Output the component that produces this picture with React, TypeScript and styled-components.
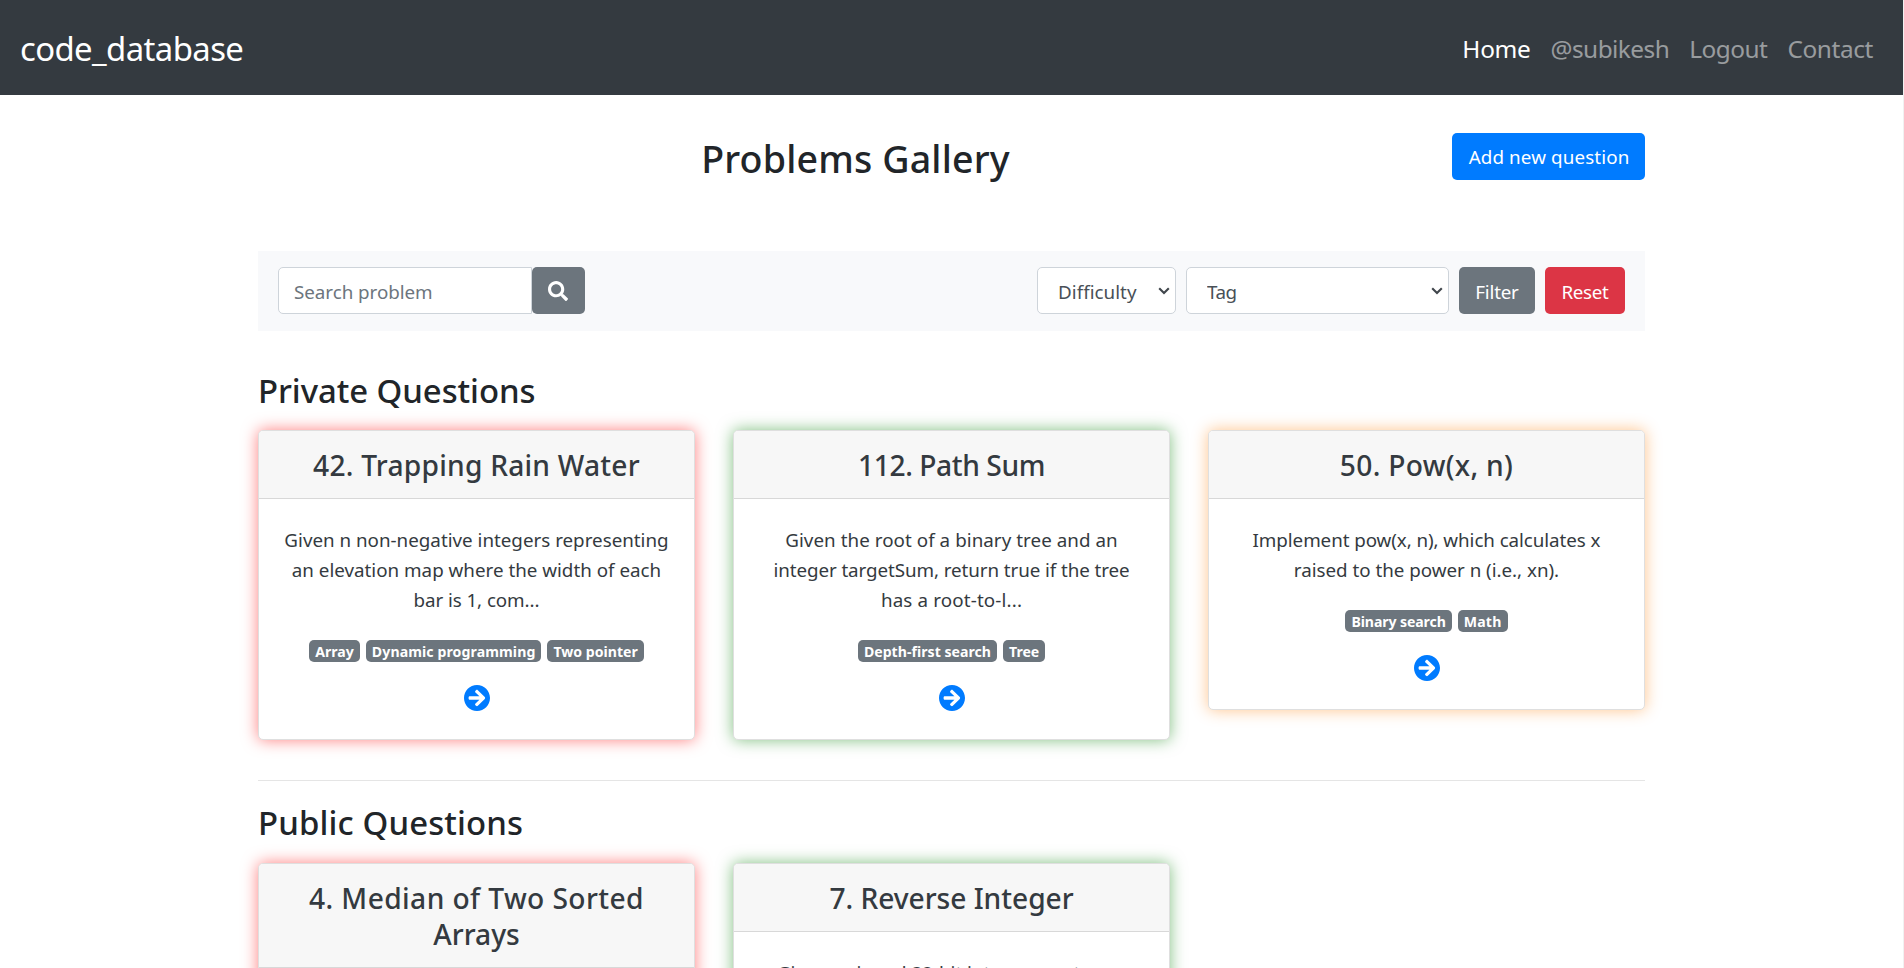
import React from "react";
import styled, { createGlobalStyle } from "styled-components";
import { FaSearch, FaArrowCircleRight } from "react-icons/fa";

const Global = createGlobalStyle`
  *, *::before, *::after { box-sizing: border-box; }
  html, body { margin: 0; height: 968px; overflow: hidden; }
  body {
    font-family: "Noto Sans", "Open Sans", sans-serif;
    font-size: 18.8px;
    line-height: 30px;
    color: #212529;
    background: #fff;
  }
  h1, h3, h4, p { margin: 0; font-weight: 500; }
`;

const Page = styled.div`
  height: 968px;
  overflow: hidden;
  border-right: 1px solid #f1f1f1;
`;

const Navbar = styled.nav`
  display: flex;
  justify-content: space-between;
  align-items: center;
  height: 95px;
  padding: 2px 30px 0 20px;
  background: #343a40;
`;

const Brand = styled.a`
  font-size: 32.9px;
  line-height: 42px;
  letter-spacing: -0.6px;
  color: #fff;
`;

const NavLinks = styled.div`
  display: flex;
  gap: 20px;
  padding-top: 1px;
`;

const NavLink = styled.a<{ $active?: boolean; $ls: number }>`
  font-size: 24.4px;
  line-height: 36px;
  letter-spacing: ${(p) => p.$ls}px;
  color: ${(p) => (p.$active ? "#fff" : "rgba(255, 255, 255, 0.5)")};
`;

const Container = styled.main`
  width: 1387px;
  margin: 38px 0 0 258px;
`;

const TitleRow = styled.header`
  display: flex;
  align-items: flex-start;
  height: 118px;
`;

const PageTitle = styled.h1`
  flex: 1;
  padding: 0 0 0 1px;
  font-size: 37.6px;
  line-height: 52px;
  letter-spacing: 0.15px;
  text-align: center;
`;

const Button = styled.button<{ $bg: string; $width: number; $ls?: number }>`
  display: flex;
  align-items: center;
  justify-content: center;
  flex: none;
  width: ${(p) => p.$width}px;
  height: 47px;
  padding: 2px 0 0;
  border: 0;
  border-radius: 5px;
  background: ${(p) => p.$bg};
  color: #fff;
  font: inherit;
  letter-spacing: ${(p) => p.$ls ?? 0}px;
`;

const IconButton = styled(Button)`
  padding: 0 1px 0 0;
`;

const AddButton = styled(Button)`
  padding: 0 0 0 1px;
`;

const Toolbar = styled.section`
  display: flex;
  justify-content: space-between;
  align-items: center;
  height: 80px;
  padding: 0 20px 1px;
  background: #f8f9fb;
`;

const ToolGroup = styled.div<{ $gap: number }>`
  display: flex;
  gap: ${(p) => p.$gap}px;
`;

const SearchInput = styled.input`
  width: 254px;
  height: 47px;
  padding: 2px 15px 0;
  border: 1px solid #ced4da;
  border-radius: 5px 0 0 5px;
  background: #fff;
  font: inherit;
  letter-spacing: -0.04px;
  &::placeholder { color: #6c757d; opacity: 1; }
`;

const SelectWrap = styled.div<{ $width: number }>`
  position: relative;
  width: ${(p) => p.$width}px;
`;

const SelectBox = styled.select<{ $ls: number }>`
  appearance: none;
  width: 100%;
  height: 47px;
  padding: 2px 0 0 20px;
  border: 1px solid #ced4da;
  border-radius: 5px;
  background: #fff;
  color: #495057;
  font: inherit;
  letter-spacing: ${(p) => p.$ls}px;
`;

const Chevron = styled.svg`
  position: absolute;
  top: 20px;
  right: 6px;
  width: 12px;
  height: 8px;
  fill: none;
  stroke: #40464c;
  stroke-width: 2.1;
  pointer-events: none;
`;

const SectionTitle = styled.h3<{ $top: number; $bottom: number; $ls: number }>`
  padding: ${(p) => p.$top}px 0 ${(p) => p.$bottom}px;
  font-size: 32.9px;
  line-height: 42px;
  letter-spacing: ${(p) => p.$ls}px;
`;

const CardGrid = styled.div`
  display: grid;
  grid-template-columns: repeat(3, 437px);
  column-gap: 38px;
  align-items: start;
`;

const CardBox = styled.article<{ $glow: string }>`
  border: 1px solid #dfdfdf;
  border-radius: 5px;
  background: #fff;
  box-shadow: 0 0 16px ${(p) => p.$glow};
  text-align: center;
  color: #343a40;
`;

const CardHeader = styled.div`
  padding: 16px 25px 15px;
  border-bottom: 1px solid #d8d8d8;
  border-radius: 4px 4px 0 0;
  background: #f7f7f7;
`;

const CardTitle = styled.h4`
  font-size: 28.2px;
  line-height: 36px;
`;

const CardBody = styled.div`
  display: flex;
  flex-direction: column;
  align-items: center;
  padding: 26px 10px 28px;
`;

const Line = styled.span<{ $ls: number }>`
  display: block;
  white-space: nowrap;
  letter-spacing: ${(p) => p.$ls}px;
`;

const Description = styled.p`
  font-weight: 400;
`;

const Tags = styled.div`
  display: flex;
  gap: 6px;
  margin: 25px 0 23px;
`;

const Badge = styled.span<{ $ls: number }>`
  height: 22px;
  padding: 1px 6px 0;
  border-radius: 5px;
  background: #6c757d;
  color: #fff;
  font-size: 14.1px;
  font-weight: 700;
  line-height: 21px;
  letter-spacing: ${(p) => p.$ls}px;
`;

const OpenLink = styled.a`
  display: flex;
  padding-left: 1px;
  color: #007bff;
`;

const Divider = styled.hr`
  height: 1px;
  margin: 40px 0 0;
  border: 0;
  background: #e5e5e5;
`;

/* A run of text with its tracking in pixels. */
type Run = [text: string, tracking: number];

interface Problem {
  level: "easy" | "medium" | "hard";
  title: Run[];
  text: Run[];
  tags: Run[];
}

const glow = {
  easy: "rgba(0, 128, 0, 0.5)",
  medium: "rgba(255, 125, 0, 0.46)",
  hard: "rgba(255, 0, 0, 0.5)",
};

const privateProblems: Problem[] = [
  {
    level: "hard",
    title: [["42. Trapping Rain Water", 0.22]],
    text: [
      ["Given n non-negative integers representing", 0],
      ["an elevation map where the width of each", 0],
      ["bar is 1, com...", -0.07],
    ],
    tags: [["Array", 0], ["Dynamic programming", 0.1], ["Two pointer", 0]],
  },
  {
    level: "easy",
    title: [["112. Path Sum", -0.42]],
    text: [
      ["Given the root of a binary tree and an", 0.05],
      ["integer targetSum, return true if the tree", -0.08],
      ["has a root-to-l...", 0.15],
    ],
    tags: [["Depth-first search", 0.03], ["Tree", -0.05]],
  },
  {
    level: "medium",
    title: [["50. Pow(x, n)", 0.3]],
    text: [
      ["Implement pow(x, n), which calculates x", -0.07],
      ["raised to the power n (i.e., xn).", -0.02],
    ],
    tags: [["Binary search", -0.1], ["Math", 0.2]],
  },
];

const publicProblems: Problem[] = [
  {
    level: "hard",
    title: [["4. Median of Two Sorted", 0.4], ["Arrays", 0]],
    text: [["There are two sorted arrays nums1 and", 0]],
    tags: [["Array", 0]],
  },
  {
    level: "easy",
    title: [["7. Reverse Integer", -0.04]],
    text: [
      ["Given a signed 32-bit integer x, return x", 0],
      ["with its digits reversed...", 0],
    ],
    tags: [["Math", 0.2]],
  },
];

function Select({ label, width, tracking }: { label: string; width: number; tracking: number }) {
  return (
    <SelectWrap $width={width}>
      <SelectBox $ls={tracking}><option>{label}</option></SelectBox>
      <Chevron viewBox="0 0 12 8"><path d="M1.2 1.2 L6 6 L10.8 1.2" /></Chevron>
    </SelectWrap>
  );
}

function Card({ problem }: { problem: Problem }) {
  return (
    <CardBox $glow={glow[problem.level]}>
      <CardHeader>
        <CardTitle>
          {problem.title.map(([t, ls]) => <Line key={t} $ls={ls}>{t}</Line>)}
        </CardTitle>
      </CardHeader>
      <CardBody>
        <Description>
          {problem.text.map(([t, ls]) => <Line key={t} $ls={ls}>{t}</Line>)}
        </Description>
        <Tags>
          {problem.tags.map(([t, ls]) => <Badge key={t} $ls={ls}>{t}</Badge>)}
        </Tags>
        <OpenLink><FaArrowCircleRight size={26} viewBox="8 8 496 496" /></OpenLink>
      </CardBody>
    </CardBox>
  );
}

export default function App() {
  return (
    <Page>
      <Global />
      <Navbar>
        <Brand>code_database</Brand>
        <NavLinks>
          <NavLink $active $ls={-0.3}>Home</NavLink>
          <NavLink $ls={-0.54}>@subikesh</NavLink>
          <NavLink $ls={-0.5}>Logout</NavLink>
          <NavLink $ls={-0.38}>Contact</NavLink>
        </NavLinks>
      </Navbar>
      <Container>
        <TitleRow>
          <PageTitle>Problems Gallery</PageTitle>
          <AddButton $bg="#007bff" $width={193} $ls={0.12}>Add new question</AddButton>
        </TitleRow>
        <Toolbar>
          <ToolGroup $gap={0}>
            <SearchInput placeholder="Search problem" />
            <IconButton $bg="#6c757d" $width={53}><FaSearch size={20} /></IconButton>
          </ToolGroup>
          <ToolGroup $gap={10}>
            <Select label="Difficulty" width={139} tracking={0.04} />
            <Select label="Tag" width={263} tracking={-0.44} />
            <Button $bg="#6c757d" $width={76} $ls={-0.2}>Filter</Button>
            <Button $bg="#dc3545" $width={80} $ls={-0.3}>Reset</Button>
          </ToolGroup>
        </Toolbar>
        <SectionTitle $top={39} $bottom={18} $ls={-0.06}>Private Questions</SectionTitle>
        <CardGrid>
          {privateProblems.map((p) => <Card key={p.title[0][0]} problem={p} />)}
        </CardGrid>
        <Divider />
        <SectionTitle $top={21} $bottom={19} $ls={0.14}>Public Questions</SectionTitle>
        <CardGrid>
          {publicProblems.map((p) => <Card key={p.title[0][0]} problem={p} />)}
        </CardGrid>
      </Container>
    </Page>
  );
}
